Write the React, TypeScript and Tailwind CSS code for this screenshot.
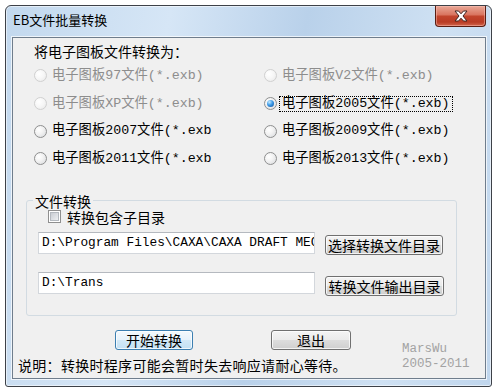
import React from "react";

type RadioProps = {
	label: string;
	disabled?: boolean;
	checked?: boolean;
	focus?: boolean;
};

const Radio = ({ label, disabled, checked, focus }: RadioProps) => {
	return (
		<div className="flex h-[27.7px] items-center">
			<span
				className={`flex h-[13px] w-[13px] shrink-0 items-center justify-center rounded-full border ${
					disabled
						? "border-[#d0d0d0] bg-[radial-gradient(circle_at_35%_35%,#ffffff_0%,#f6f6f6_50%,#e6e6e6_100%)]"
						: "border-[#8e8f8f] bg-[radial-gradient(circle_at_35%_35%,#ffffff_0%,#f3f3f3_40%,#d6d8db_100%)]"
				}`}
			>
				{checked && (
					<span className="h-[7px] w-[7px] rounded-full bg-[radial-gradient(circle_at_35%_30%,#c6ecff_0%,#3d9ae8_45%,#0b4c94_100%)]" />
				)}
			</span>
			<span
				className={`ml-[2px] border px-[2px] text-[13.3px] leading-[14px] font-['Liberation_Mono','Noto_Sans_CJK_SC',monospace] ${
					focus ? "border-dotted border-black" : "border-transparent"
				} ${disabled ? "text-[#8d8d8d]" : "text-black"}`}
			>
				{label}
			</span>
		</div>
	);
};

const WinButton = ({ label, primary, className }: { label: string; primary?: boolean; className?: string }) => (
	<div
		className={`flex items-center justify-center rounded-[3px] border text-[14px] leading-none text-black shadow-[inset_0_0_0_1px_rgba(255,255,255,0.75)] font-['Noto_Sans_CJK_SC',sans-serif] ${
			primary
				? "border-[#3c7fb1] bg-[linear-gradient(180deg,#f4f9fd_0%,#e6f2fb_50%,#d3e9f7_51%,#c3e0f3_100%)]"
				: "border-[#707070] bg-[linear-gradient(180deg,#f4f4f4_0%,#ebebeb_50%,#dddddd_51%,#cfcfcf_100%)]"
		} ${className ?? ""}`}
	>
		{label}
	</div>
);

const TextBox = ({ value }: { value: string }) => (
	<div className="flex h-[22px] w-[277px] items-center overflow-hidden whitespace-nowrap border border-[#d3d7dc] border-t-[#b5b9bf] bg-white pl-[3px] text-[12.8px] text-black font-['Liberation_Mono',monospace]">
		{value}
	</div>
);

export default function App() {
	return (
		<div className="h-[389px] w-[500px] overflow-hidden bg-white pl-[5px] pt-[5px]">
			<div className="flex h-[382px] w-[487px] flex-col rounded-t-[6px] rounded-b-[3px] border border-[#3d4148] bg-[linear-gradient(100deg,#c2d8ee_0%,#d6e6f6_30%,#b9d1ea_55%,#cfe1f3_80%,#c0d6ed_100%)] shadow-[inset_0_0_0_1px_rgba(255,255,255,0.55)]">
				{/* title bar */}
				<div className="flex h-[31px] shrink-0 items-start">
					<span className="ml-[7px] mt-[5px] text-[13px] leading-[18px] text-black font-['Noto_Sans_CJK_SC',sans-serif]">
						EB文件批量转换
					</span>
					<div className="ml-auto mr-[5px] flex h-[21px] w-[51px] items-center justify-center rounded-b-[4px] border border-t-0 border-[#5a1d12] bg-[linear-gradient(180deg,#e9a897_0%,#d9735e_45%,#c2452d_50%,#b93b24_80%,#d2664c_100%)] shadow-[inset_0_0_0_1px_rgba(255,200,190,0.45)]">
						<svg width="16" height="12" viewBox="0 0 16 12">
							<polygon
								points="2,1 5.5,1 8,3.8 10.5,1 14,1 10,6 14,11 10.5,11 8,8.2 5.5,11 2,11 6,6"
								fill="#ffffff"
								stroke="#3f2420"
								strokeWidth="1"
								strokeLinejoin="round"
							/>
						</svg>
					</div>
				</div>

				{/* client area */}
				<div className="ml-[6px] flex h-[342px] w-[474px] shrink-0 flex-col border border-[#6f7d8c] bg-[#f0f0f0] shadow-[0_0_0_1px_rgba(255,255,255,0.7)] font-['Noto_Sans_CJK_SC',sans-serif]">
					<div className="ml-[21px] mt-[3px] h-[20px] text-[14px] leading-[20px] text-black">
						将电子图板文件转换为：
					</div>

					<div className="ml-[21px] mt-[1px] grid grid-cols-[230px_1fr]">
						<Radio label="电子图板97文件(*.exb)" disabled />
						<Radio label="电子图板V2文件(*.exb)" disabled />
						<Radio label="电子图板XP文件(*.exb)" disabled />
						<Radio label="电子图板2005文件(*.exb)" checked focus />
						<Radio label="电子图板2007文件(*.exb" />
						<Radio label="电子图板2009文件(*.exb)" />
						<Radio label="电子图板2011文件(*.exb" />
						<Radio label="电子图板2013文件(*.exb)" />
					</div>

					<fieldset className="ml-[13px] mt-[19px] w-[431px] rounded-[3px] border border-[#d2dbe2] pb-[19px]">
						<legend className="ml-[6px] px-[2px] text-[14px] leading-[18px] text-black">文件转换</legend>
						<div className="pl-[11px]">
							<div className="ml-[10px] flex h-[14px] items-center">
								<span className="flex h-[13px] w-[13px] items-center justify-center border border-[#8f8f8f] bg-white">
									<span className="h-[9px] w-[9px] border border-[#b4b9bf] bg-[linear-gradient(135deg,#c9cdd3_0%,#eef0f2_100%)]" />
								</span>
								<span className="ml-[6px] text-[14px] leading-[14px] text-black">转换包含子目录</span>
							</div>
							<div className="mt-[8px] flex items-start">
								<TextBox value={"D:\\Program Files\\CAXA\\CAXA DRAFT MEC"} />
								<WinButton label="选择转换文件目录" className="ml-[10px] mt-[3px] h-[20px] w-[118px]" />
							</div>
							<div className="mt-[17px] flex items-start">
								<TextBox value={"D:\\Trans"} />
								<WinButton label="转换文件输出目录" className="ml-[10px] mt-[4px] h-[20px] w-[119px]" />
							</div>
						</div>
					</fieldset>

					<div className="mt-[14px] flex">
						<div className="flex w-[389px] flex-col">
							<div className="ml-[102px] flex h-[20px]">
								<WinButton label="开始转换" primary className="h-[20px] w-[78px]" />
								<WinButton label="退出" className="ml-[78px] h-[20px] w-[80px]" />
							</div>
							<div className="ml-[5px] mt-[7px] text-[14px] leading-[16px] tracking-[0.3px] text-black">
								说明：转换时程序可能会暂时失去响应请耐心等待。
							</div>
						</div>
						<div className="mt-[12px] flex flex-col text-[12.5px] leading-[15px] text-[#a3a3a3] font-['Liberation_Mono',monospace]">
							<span>MarsWu</span>
							<span>2005-2011</span>
						</div>
					</div>
				</div>
			</div>
		</div>
	);
}
